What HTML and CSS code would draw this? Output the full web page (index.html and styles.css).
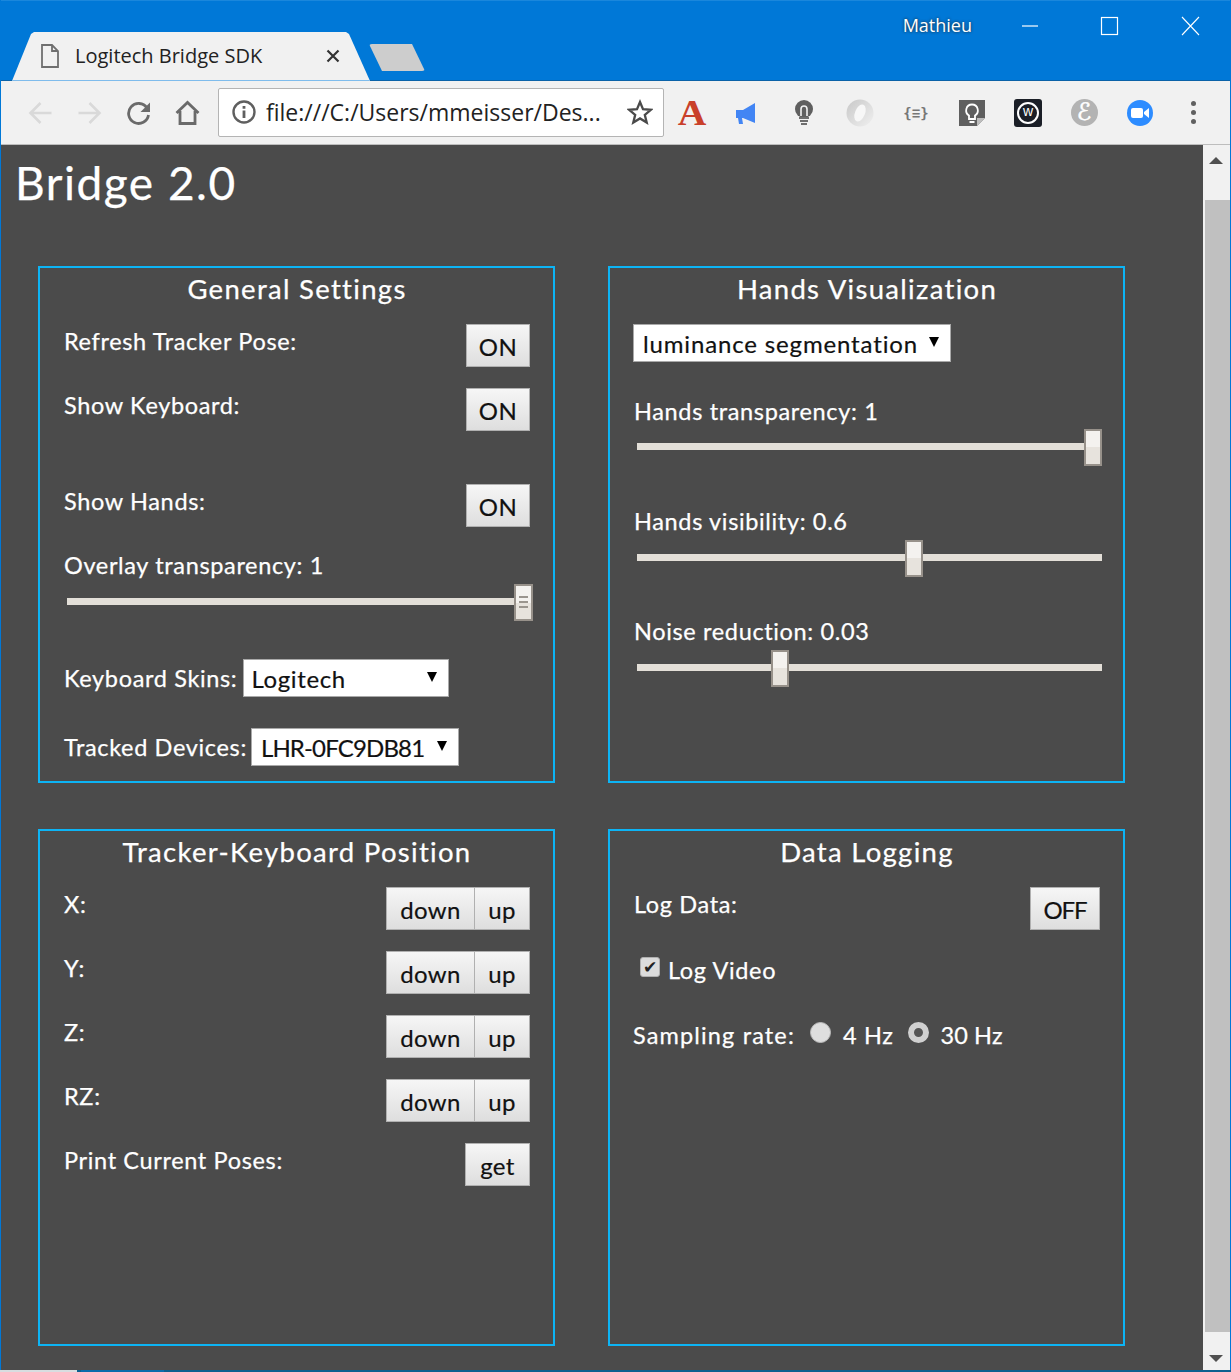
FILE: index.html
```html
<!DOCTYPE html>
<html lang="en">
<head>
  <meta charset="UTF-8">
  <title>Logitech Bridge SDK</title>
  <link rel="stylesheet" href="styles.css">
</head>
<body>
  <div class="window">
    <div class="titlebar">
      <div class="tab">
        <svg class="tab-doc" width="18" height="24" viewBox="0 0 18 24"><path d="M1 1h10l6 6v16H1z M11 1v6h6" fill="#f1f1f1" stroke="#6f6f6f" stroke-width="1.8"/></svg>
        <span class="tab-title">Logitech Bridge SDK</span>
        <svg class="tab-close" width="14" height="14" viewBox="0 0 14 14"><path d="M1.5 1.5l11 11M12.5 1.5l-11 11" stroke="#333" stroke-width="2.2"/></svg>
      </div>
      <div class="new-tab"></div>
      <div class="title-right">
        <span class="user">Mathieu</span>
        <svg class="win-btn" width="80" height="22" viewBox="0 0 80 22"><path d="M32 11h16" stroke="#fff" stroke-width="1.2"/></svg>
        <svg class="win-btn" width="80" height="22" viewBox="0 0 80 22"><rect x="31.5" y="2.5" width="16" height="17" fill="none" stroke="#fff" stroke-width="1.2"/></svg>
        <svg class="win-btn" width="80" height="22" viewBox="0 0 80 22"><path d="M32 2l17 18M49 2L32 20" stroke="#fff" stroke-width="1.1"/></svg>
      </div>
    </div>

    <div class="toolbar">
      <div class="nav">
        <svg width="49" height="26" viewBox="0 0 26 26"><path d="M24 13H4M13 3L3 13l10 10" fill="none" stroke="#d9d9d9" stroke-width="2.6"/></svg>
        <svg width="49" height="26" viewBox="0 0 26 26"><path d="M2 13h20M13 3l10 10-10 10" fill="none" stroke="#d9d9d9" stroke-width="2.6"/></svg>
        <svg width="49" height="26" viewBox="0 0 26 26"><path d="M21.5 8A10 10 0 1 0 23 15" fill="none" stroke="#6a6a6a" stroke-width="2.8"/><path d="M24.5 2.5v9.5h-9.5z" fill="#6a6a6a"/></svg>
        <svg width="49" height="26" viewBox="0 0 26 26"><path d="M2 13L13 2.5 24 13M5.5 11v12.5h15V11" fill="none" stroke="#6a6a6a" stroke-width="2.8"/></svg>
      </div>
      <div class="omnibox">
        <svg width="26" height="26" viewBox="0 0 26 26"><circle cx="13" cy="13" r="10.5" fill="none" stroke="#5f5f5f" stroke-width="2.4"/><path d="M11.6 11.5h2.8v7.5h-2.8zM11.6 7h2.8v2.8h-2.8z" fill="#5f5f5f"/></svg>
        <span class="url">file:///C:/Users/mmeisser/Des...</span>
        <svg class="star" width="26" height="26" viewBox="0 0 26 26"><path d="M13 3l3 7.2 7.8.6-6 5.1 1.900 7.600L13 19.400l-6.700 4.100 1.900-7.600-6-5.100 7.800-.600z" fill="none" stroke="#4a4a4a" stroke-width="2.300"/></svg>
      </div>
      <div class="extensions">
        <div class="ext"><span class="ext-a">A</span></div>
        <div class="ext"><svg width="28" height="28" viewBox="0 0 28 28"><path d="M2 11h7l12-7v20l-12-5H8l1 6H5l-1-6H2z" fill="#4285f4"/></svg></div>
        <div class="ext"><svg width="28" height="28" viewBox="0 0 28 28"><circle cx="14" cy="10" r="9" fill="#5f5f5f"/><path d="M11 17v-7a3 3 0 0 1 6 0v7" fill="none" stroke="#f1f1f1" stroke-width="1.6"/><path d="M9 19h10M10 22h8M11 25h6" stroke="#6e6e6e" stroke-width="2"/></svg></div>
        <div class="ext"><svg width="28" height="28" viewBox="0 0 28 28"><defs><linearGradient id="ringFill" x1="0" y1="0" x2="1" y2="1"><stop offset="0" stop-color="#c8c8c8"/><stop offset="1" stop-color="#f0f0f0"/></linearGradient></defs><circle cx="14" cy="14" r="13.500" fill="url(#ringFill)"/><ellipse cx="14" cy="14" rx="5" ry="9" transform="rotate(22 14 14)" fill="#f7f7f7"/></svg></div>
        <div class="ext"><span class="ext-json">{≡}</span></div>
        <div class="ext"><svg width="28" height="28" viewBox="0 0 28 28"><path d="M1 1h26v18l-8 8H1z" fill="#5f5f5f"/><path d="M19 27v-8h8z" fill="#bdbdbd"/><path d="M11 20v-3.500c-5-3-3-11 3-11s8 8 3 11V20zM11.500 23h5" fill="none" stroke="#fff" stroke-width="1.800"/></svg></div>
        <div class="ext"><div class="ext-w"><span>w</span></div></div>
        <div class="ext"><div class="ext-e">ℰ</div></div>
        <div class="ext"><svg width="28" height="28" viewBox="0 0 28 28"><circle cx="14" cy="14" r="13" fill="#2d8cff"/><rect x="5" y="9" width="12" height="10" rx="2" fill="#fff"/><path d="M18 13l5-4v10l-5-4z" fill="#fff"/></svg></div>
        <div class="dots"><i></i><i></i><i></i></div>
      </div>
    </div>

    <div class="viewport">
      <div class="page">
        <h1>Bridge 2.0</h1>
        <div class="panels">

          <section class="panel">
            <h2>General Settings</h2>
            <div class="row"><span>Refresh Tracker Pose:</span><button class="btn on">ON</button></div>
            <div class="row"><span>Show Keyboard:</span><button class="btn on">ON</button></div>
            <div class="row row-spaced"><span>Show Hands:</span><button class="btn on">ON</button></div>
            <div class="label label-overlay">Overlay transparency: 1</div>
            <div class="slider slider-overlay"><div class="thumb thumb-grip" style="left: 447px"><i></i><i></i><i></i></div></div>
            <div class="inline-field skins">
              <span>Keyboard Skins:</span>
              <div class="select select-skins">Logitech</div>
            </div>
            <div class="inline-field devices">
              <span>Tracked Devices:</span>
              <div class="select select-devices">LHR-0FC9DB81</div>
            </div>
          </section>

          <section class="panel">
            <h2>Hands Visualization</h2>
            <div class="select select-mode">luminance segmentation</div>
            <div class="label label-hands">Hands transparency: 1</div>
            <div class="slider"><div class="thumb" style="left: 447px"></div></div>
            <div class="label label-next">Hands visibility: 0.6</div>
            <div class="slider"><div class="thumb" style="left: 268px"></div></div>
            <div class="label label-next label-noise">Noise reduction: 0.03</div>
            <div class="slider"><div class="thumb" style="left: 134px"></div></div>
          </section>

          <section class="panel">
            <h2>Tracker-Keyboard Position</h2>
            <div class="row"><span>X:</span><div class="pair"><button class="btn down">down</button><button class="btn up">up</button></div></div>
            <div class="row"><span>Y:</span><div class="pair"><button class="btn down">down</button><button class="btn up">up</button></div></div>
            <div class="row"><span>Z:</span><div class="pair"><button class="btn down">down</button><button class="btn up">up</button></div></div>
            <div class="row"><span>RZ:</span><div class="pair"><button class="btn down">down</button><button class="btn up">up</button></div></div>
            <div class="row"><span>Print Current Poses:</span><button class="btn get">get</button></div>
          </section>

          <section class="panel">
            <h2>Data Logging</h2>
            <div class="row"><span>Log Data:</span><button class="btn off">OFF</button></div>
            <div class="check-row"><span class="checkbox">✔</span><span>Log Video</span></div>
            <div class="radio-row">
              <span class="rate-label">Sampling rate:</span>
              <span class="radio"></span><span>4 Hz</span>
              <span class="radio checked"></span><span class="rate-high">30 Hz</span>
            </div>
          </section>

        </div>
      </div>
      <div class="scrollbar">
        <div class="arrow arrow-up"></div>
        <div class="scroll-thumb"></div>
        <div class="arrow arrow-down"></div>
      </div>
    </div>

    <div class="taskstrip"><div class="strip-light"></div><div class="strip-blue"></div></div>
  </div>
</body>
</html>
```

FILE: styles.css
```css
* {
  box-sizing: border-box;
}

html, body {
  margin: 0;
  height: 100%;
  overflow: hidden;
}

body {
  background: #0078d7;
  font-family: "Lato", "Open Sans", sans-serif;
}

.window {
  height: 1372px;
  display: flex;
  flex-direction: column;
  padding: 0 1px;
}

/* title bar */
.titlebar {
  height: 81px;
  flex: none;
  display: flex;
  align-items: flex-end;
  background: #0078d7;
  border-top: 1px solid #1a87dc;
  border-bottom: 1px solid #0a62a8;
  padding-left: 11px;
}

.tab {
  width: 358px;
  height: 49px;
  margin-bottom: -1px;
  display: flex;
  align-items: center;
  padding: 0 0 0 29px;
  background: #f1f1f1;
  border-bottom: 1px solid #7fbcec;
  clip-path: polygon(0 100%, 19px 2px, 22px 0, 334px 0, 337px 2px, 100% 100%);
}

.tab-doc {
  flex: none;
}

.tab-title {
  margin: -2px 0 0 16px;
  width: 251px;
  font-family: "Open Sans", sans-serif;
  font-size: 20px;
  color: #222;
}

.tab-close {
  flex: none;
}

.new-tab {
  width: 56px;
  height: 27px;
  margin: 0 0 9px -1px;
  background: #cdcdcd;
  border-radius: 3px;
  clip-path: polygon(0 0, 43px 0, 100% 100%, 13px 100%);
}

.title-right {
  position: absolute;
  top: 15px;
  right: 1px;
  display: flex;
  align-items: center;
}

.user {
  margin: -2px 18px 0 0;
  font-family: "Open Sans", sans-serif;
  font-size: 18px;
  color: #fff;
  text-shadow: 0 0 3px #222;
}

.win-btn {
  display: block;
}

/* toolbar */
.toolbar {
  height: 64px;
  flex: none;
  display: flex;
  align-items: center;
  background: #f1f1f1;
  border-bottom: 1px solid #bdbdbd;
  padding-left: 15px;
}

.nav {
  display: flex;
  width: 202px;
  flex: none;
}

.omnibox {
  width: 446px;
  height: 49px;
  flex: none;
  display: flex;
  align-items: center;
  margin-top: -1px;
  padding: 0 10px 0 12px;
  background: #fff;
  border: 1px solid #b4b4b4;
  border-radius: 2px;
}

.url {
  margin-left: 9px;
  flex: 1;
  font-family: "Open Sans", sans-serif;
  font-size: 23px;
  color: #222;
  white-space: nowrap;
}

.extensions {
  display: flex;
  align-items: center;
}

.ext {
  width: 56px;
  height: 30px;
  display: flex;
  align-items: center;
  justify-content: center;
}

.ext-a {
  font-family: "Liberation Serif", serif;
  font-weight: bold;
  font-size: 36px;
  line-height: 30px;
  color: #c9402a;
  transform: scaleX(1.1);
}

.ext-json {
  font-family: "DejaVu Sans Mono", monospace;
  font-size: 14px;
  font-weight: bold;
  color: #777;
}

.ext-w {
  width: 28px;
  height: 28px;
  display: flex;
  align-items: center;
  justify-content: center;
  background: #1b1f27;
  border-radius: 3px;
}

.ext-w span {
  width: 22px;
  height: 22px;
  border: 2px solid #fff;
  border-radius: 50%;
  text-align: center;
  font-size: 14px;
  line-height: 15px;
  color: #fff;
  font-family: "Liberation Sans", sans-serif;
}

.ext-e {
  width: 27px;
  height: 27px;
  border-radius: 50%;
  background: #b3b3b3;
  text-align: center;
  font-family: "DejaVu Sans", serif;
  font-size: 24px;
  line-height: 27px;
  color: #fff;
  -webkit-text-stroke: 0.5px #fff;
}

.dots {
  display: flex;
  flex-direction: column;
  gap: 4px;
  margin-left: 23px;
}

.dots i {
  display: block;
  width: 5px;
  height: 5px;
  border-radius: 50%;
  background: #606060;
}

/* page */
.viewport {
  flex: 1;
  min-height: 0;
  display: flex;
  background: #4b4b4b;
}

.page {
  flex: 1;
  padding: 0 0 0 14px;
  color: #fff;
  -webkit-text-stroke: 0.25px #fff;
}

h1 {
  margin: 7px 0 0;
  font-size: 46px;
  line-height: 62px;
  font-weight: 400;
  letter-spacing: 1.5px;
}

.panels {
  display: grid;
  grid-template-columns: 517px 517px;
  grid-template-rows: 517px 517px;
  column-gap: 53px;
  row-gap: 46px;
  margin: 52px 0 0 23px;
}

.panel {
  border: 2px solid #0db4f5;
  padding: 0 23px 0 24px;
  font-size: 23.5px;
  letter-spacing: 0.65px;
}

h2 {
  margin: 0 0 15px;
  height: 41px;
  font-size: 27.500px;
  line-height: 41px;
  font-weight: 400;
  text-align: center;
  letter-spacing: 1.3px;
}

.row {
  height: 43px;
  margin-bottom: 21px;
  display: flex;
  justify-content: space-between;
  align-items: flex-start;
  line-height: 34px;
}

.row-spaced {
  margin-top: 53px;
}

.pair {
  display: flex;
}

.btn {
  height: 43px;
  padding: 2px 0 0;
  font-family: inherit;
  font-size: 24px;
  letter-spacing: 0.4px;
  color: #111;
  background: linear-gradient(#f6f6f6, #dedede);
  border: 1px solid #b0b0b0;
  -webkit-text-stroke: 0.2px #111;
}

.on { width: 64px; }
.off { width: 70px; letter-spacing: -1.2px; }
.get { width: 65px; }
.down { width: 89px; }
.up { width: 56px; margin-left: -1px; }

.label {
  line-height: 30px;
}

/* collapses with the 21px under the row above */
.label-overlay {
  margin-top: 23px;
}

.label-hands {
  margin-top: 34px;
}

.label-next {
  margin-top: 56px;
}

.label-noise {
  margin-top: 55px;
}

/* sliders */
.slider {
  position: relative;
  width: 465px;
  height: 7px;
  margin: 17px 0 0 3px;
  background: #e3dfd8;
}

.label-next + .slider {
  margin-top: 18px;
}

.slider-overlay {
  width: 465px;
  margin-top: 18px;
}

.thumb {
  position: absolute;
  top: -14px;
  width: 18px;
  height: 37px;
  border: 2px solid #97918a;
  background: linear-gradient(#f4f2ef 50%, #e7e3dd 50%);
}

.thumb-grip {
  width: 19px;
  display: flex;
  flex-direction: column;
  align-items: center;
  gap: 3px;
  padding-top: 10px;
}

.thumb-grip i {
  display: block;
  width: 9px;
  height: 2px;
  background: #9a958e;
}

/* selects */
.inline-field {
  display: flex;
  align-items: center;
  gap: 6px;
}

.skins {
  margin-top: 54px;
}

.devices {
  margin-top: 31px;
  gap: 4px;
}

.select {
  position: relative;
  height: 38px;
  padding-left: 8px;
  background: #fff;
  border: 1px solid #a9a9a9;
  font-size: 24px;
  line-height: 38px;
  color: #111;
  -webkit-text-stroke: 0.2px #111;
}

.select::after {
  content: "";
  position: absolute;
  top: 12px;
  right: 11px;
  border-left: 5px solid transparent;
  border-right: 5px solid transparent;
  border-top: 10px solid #000;
}

.select-skins { width: 206px; padding-left: 7px; }
.select-devices { width: 208px; padding-left: 9px; letter-spacing: -0.85px; }
.select-mode { width: 318px; margin-left: -1px; padding-left: 9px; letter-spacing: 0.85px; }

/* log options */
.check-row {
  display: flex;
  align-items: center;
  gap: 8px;
  margin: 26px 0 0 6px;
}

.checkbox {
  width: 20px;
  height: 20px;
  margin-top: -6px;
  border-radius: 3px;
  background: #dcdcdc;
  border: 1px solid #b0b0b0;
  color: #222;
  font-family: "DejaVu Sans", sans-serif;
  font-size: 17px;
  line-height: 18px;
  letter-spacing: 0;
  text-align: center;
  -webkit-text-stroke: 0;
}

.radio-row {
  display: flex;
  align-items: center;
  margin: 37px 0 0 -1px;
}

.rate-label {
  letter-spacing: 1.15px;
}

.rate-high {
  letter-spacing: 0.1px;
}

.radio {
  width: 21px;
  height: 21px;
  margin: -6px 12px 0 15px;
  border-radius: 50%;
  background: #dedede;
  border: 1px solid #bbb;
}

.radio.checked {
  border: 6px solid #d0d0d0;
  background: #555;
  margin-left: 14px;
}

/* scrollbar */
.scrollbar {
  position: relative;
  width: 27px;
  flex: none;
  display: flex;
  flex-direction: column;
  background: #f1f1f1;
}

.arrow {
  height: 55px;
  flex: none;
  position: relative;
}

.arrow::after {
  content: "";
  position: absolute;
  left: 6px;
  border-left: 7px solid transparent;
  border-right: 7px solid transparent;
}

.arrow-up::after {
  top: 12px;
  border-bottom: 7px solid #505050;
}

.arrow-down {
  height: 38px;
}

.arrow-down::after {
  bottom: 8px;
  border-top: 7px solid #505050;
}

.scroll-thumb {
  flex: 1;
  margin-left: 2px;
  background: #c0c0c0;
}

/* bottom edge of the window */
.taskstrip {
  height: 2px;
  flex: none;
  margin: 0 -1px;
  display: flex;
  background: #0b5f8f;
}

.strip-light {
  width: 77px;
  background: #d8dde0;
}

.strip-blue {
  width: 83px;
  margin-left: 4px;
  background: #0a6cab;
}
```
